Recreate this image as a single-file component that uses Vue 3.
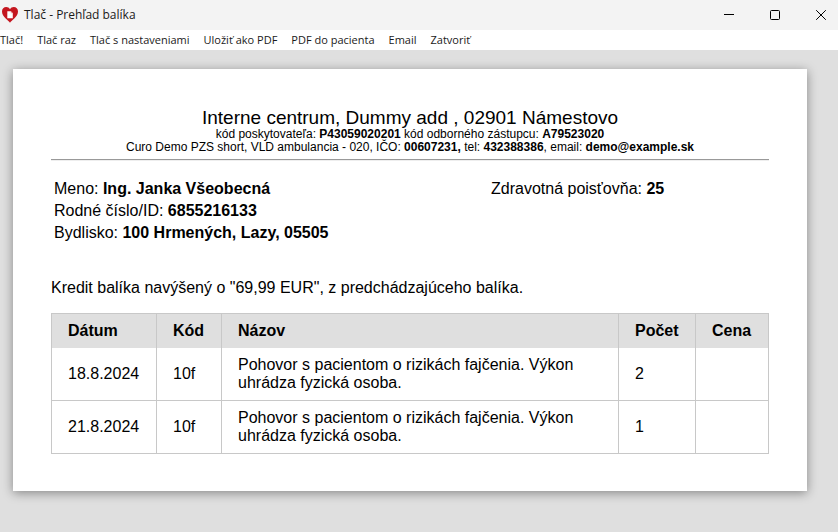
<script setup>
const menu = [
  'Tlač!',
  'Tlač raz',
  'Tlač s nastaveniami',
  'Uložiť ako PDF',
  'PDF do pacienta',
  'Email',
  'Zatvoriť',
]

const rows = [
  { date: '18.8.2024', code: '10f', name: 'Pohovor s pacientom o rizikách fajčenia. Výkon uhrádza fyzická osoba.', count: 2, price: '' },
  { date: '21.8.2024', code: '10f', name: 'Pohovor s pacientom o rizikách fajčenia. Výkon uhrádza fyzická osoba.', count: 1, price: '' },
]
</script>

<template>
  <div class="window">
    <header class="titlebar">
      <svg class="logo" viewBox="0 0 16 16" aria-hidden="true">
        <path d="M8 15.800C6.500 13 0 9.800 0 4.400C0 1.600 1.900 0 4.200 0C5.900 0 7.200.800 8 2.200C8.800.800 10.100 0 11.800 0C14.100 0 16 1.600 16 4.400C16 9.800 9.500 13 8 15.800Z" fill="#c4161f" />
        <path d="M5.300 4.200H8.800L10.800 6.200V11.200H5.300Z" fill="#fff" />
        <path d="M8.800 4.200V6.200H10.800Z" fill="#e9a5a8" />
      </svg>
      <span class="title">Tlač - Prehľad balíka</span>
      <div class="controls">
        <button type="button" aria-label="Minimalizovať">
          <svg viewBox="0 0 10 10"><path d="M0 4.500H10" /></svg>
        </button>
        <button type="button" aria-label="Maximalizovať">
          <svg viewBox="0 0 10 10"><rect x=".5" y=".5" width="9" height="9" rx="1" /></svg>
        </button>
        <button type="button" aria-label="Zavrieť">
          <svg viewBox="0 0 10 10"><path d="M.2.2L9.800 9.800M9.800.2L.2 9.800" /></svg>
        </button>
      </div>
    </header>

    <nav class="menu">
      <button v-for="item in menu" :key="item" type="button">{{ item }}</button>
    </nav>

    <main class="desk">
      <article class="sheet">
        <div class="provider">
          <h1>Interne centrum, Dummy add , 02901 Námestovo</h1>
          <p>kód poskytovateľa: <b>P43059020201</b> kód odborného zástupcu: <b>A79523020</b></p>
          <p>Curo Demo PZS short, VLD ambulancia - 020, IČO: <b>00607231,</b> tel: <b>432388386</b>, email: <b>demo@example.sk</b></p>
        </div>
        <hr />

        <div class="patient">
          <div>
            <p>Meno: <b>Ing. Janka Všeobecná</b></p>
            <p>Rodné číslo/ID: <b>6855216133</b></p>
            <p>Bydlisko: <b>100 Hrmených, Lazy, 05505</b></p>
          </div>
          <div>
            <p>Zdravotná poisťovňa: <b>25</b></p>
          </div>
        </div>

        <p class="credit">Kredit balíka navýšený o "69,99 EUR", z predchádzajúceho balíka.</p>

        <table>
          <colgroup>
            <col class="c-date" /><col class="c-code" /><col /><col class="c-count" /><col class="c-price" />
          </colgroup>
          <thead>
            <tr><th>Dátum</th><th>Kód</th><th>Názov</th><th>Počet</th><th>Cena</th></tr>
          </thead>
          <tbody>
            <tr v-for="row in rows" :key="row.date">
              <td>{{ row.date }}</td>
              <td>{{ row.code }}</td>
              <td>{{ row.name }}</td>
              <td>{{ row.count }}</td>
              <td>{{ row.price }}</td>
            </tr>
          </tbody>
        </table>
      </article>
    </main>
  </div>
</template>

<style>
body {
  margin: 0;
  background: #dfdfdf;
}
</style>

<style scoped>
.window {
  min-height: 100vh;
  display: flex;
  flex-direction: column;
  font-family: "Liberation Sans", Arial, sans-serif;
  font-size: 16px;
  line-height: 18px;
  color: #000;
}

button {
  border: 0;
  padding: 0;
  background: none;
  font: inherit;
  color: inherit;
}

p,
h1 {
  margin: 0;
}

.titlebar,
.menu {
  font-family: "Segoe UI", "Open Sans", sans-serif;
  font-size: 12px;
  color: #1a1a1a;
}

.titlebar {
  height: 30px;
  display: flex;
  align-items: center;
  background: #f3f3f3;
}

.logo {
  width: 16px;
  height: 16px;
  margin: 0 6px 0 2px;
}

.title {
  flex: 1;
}

.controls {
  display: flex;
  gap: 12px;
}

.controls button {
  width: 34px;
  height: 28px;
  display: flex;
  align-items: center;
  justify-content: center;
}

.controls svg {
  width: 10px;
  height: 10px;
  fill: none;
  stroke: #000;
  stroke-width: 1;
}

.menu {
  height: 20px;
  display: flex;
  align-items: center;
  gap: 14px;
  font-size: 11px;
  background: #fff;
}

.desk {
  flex: 1;
  padding: 19px 31px 40px 13px;
  background: #dfdfdf;
}

.sheet {
  padding: 38px 38px 37px;
  background: #fff;
  box-shadow: 0 2px 10px rgba(0, 0, 0, 0.4);
}

.provider {
  text-align: center;
  font-size: 12px;
  line-height: 13px;
}

.provider h1 {
  font-size: 19px;
  font-weight: 400;
  line-height: 21px;
}

hr {
  margin: 5px 0 0;
  border: 0;
  border-top: 1px solid #999;
  border-bottom: 1px solid #eee;
}

.patient {
  display: grid;
  grid-template-columns: 437fr 275fr;
  padding: 17px 3px 0;
  line-height: 22px;
}

.credit {
  padding: 35px 0 16px;
}

table {
  width: 100%;
  table-layout: fixed;
  border-collapse: collapse;
}

th,
td {
  padding: 8px 16px;
  border: 1px solid #c8c8c8;
  text-align: left;
}

th {
  border-bottom: 0;
  background: #dfdfdf;
}

tbody tr:first-child td {
  border-top: 0;
}

.c-date {
  width: 105px;
}

.c-code {
  width: 65px;
}

.c-count {
  width: 77px;
}

.c-price {
  width: 73px;
}
</style>
